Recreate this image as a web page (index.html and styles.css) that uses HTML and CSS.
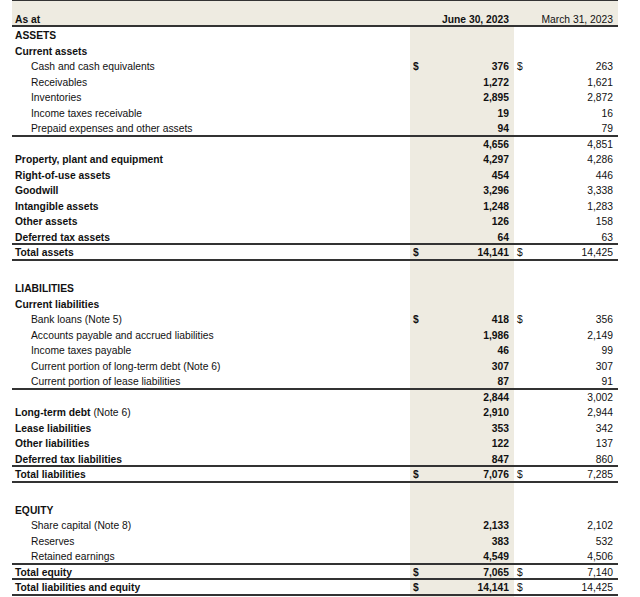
FILE: index.html
```html
<!DOCTYPE html>
<html>
<head>
<meta charset="utf-8">
<link rel="stylesheet" href="styles.css">
</head>
<body>
<div class="sheet">
  <div class="head">
    <div class="lab b">As at</div>
    <div class="hv b">June 30, 2023</div>
    <div class="hv">March 31, 2023</div>
  </div>

  <div class="row"><div class="lab b">ASSETS</div></div>
  <div class="row"><div class="lab b">Current assets</div></div>
  <div class="row"><div class="lab ind">Cash and cash equivalents</div><div class="val b"><span>$</span><span>376</span></div><div class="val"><span>$</span><span>263</span></div></div>
  <div class="row"><div class="lab ind">Receivables</div><div class="val b"><span></span><span>1,272</span></div><div class="val"><span></span><span>1,621</span></div></div>
  <div class="row"><div class="lab ind">Inventories</div><div class="val b"><span></span><span>2,895</span></div><div class="val"><span></span><span>2,872</span></div></div>
  <div class="row"><div class="lab ind">Income taxes receivable</div><div class="val b"><span></span><span>19</span></div><div class="val"><span></span><span>16</span></div></div>
  <div class="row"><div class="lab ind">Prepaid expenses and other assets</div><div class="val b"><span></span><span>94</span></div><div class="val"><span></span><span>79</span></div></div>
  <div class="rule"></div>
  <div class="row"><div class="lab"></div><div class="val b"><span></span><span>4,656</span></div><div class="val"><span></span><span>4,851</span></div></div>
  <div class="row"><div class="lab b">Property, plant and equipment</div><div class="val b"><span></span><span>4,297</span></div><div class="val"><span></span><span>4,286</span></div></div>
  <div class="row"><div class="lab b">Right-of-use assets</div><div class="val b"><span></span><span>454</span></div><div class="val"><span></span><span>446</span></div></div>
  <div class="row"><div class="lab b">Goodwill</div><div class="val b"><span></span><span>3,296</span></div><div class="val"><span></span><span>3,338</span></div></div>
  <div class="row"><div class="lab b">Intangible assets</div><div class="val b"><span></span><span>1,248</span></div><div class="val"><span></span><span>1,283</span></div></div>
  <div class="row"><div class="lab b">Other assets</div><div class="val b"><span></span><span>126</span></div><div class="val"><span></span><span>158</span></div></div>
  <div class="row"><div class="lab b">Deferred tax assets</div><div class="val b"><span></span><span>64</span></div><div class="val"><span></span><span>63</span></div></div>
  <div class="rule"></div>
  <div class="row"><div class="lab b">Total assets</div><div class="val b"><span>$</span><span>14,141</span></div><div class="val"><span>$</span><span>14,425</span></div></div>
  <div class="rule"></div>

  <div class="gap gap1"></div>

  <div class="row"><div class="lab b">LIABILITIES</div></div>
  <div class="row"><div class="lab b">Current liabilities</div></div>
  <div class="row"><div class="lab ind">Bank loans (Note 5)</div><div class="val b"><span>$</span><span>418</span></div><div class="val"><span>$</span><span>356</span></div></div>
  <div class="row"><div class="lab ind">Accounts payable and accrued liabilities</div><div class="val b"><span></span><span>1,986</span></div><div class="val"><span></span><span>2,149</span></div></div>
  <div class="row"><div class="lab ind">Income taxes payable</div><div class="val b"><span></span><span>46</span></div><div class="val"><span></span><span>99</span></div></div>
  <div class="row"><div class="lab ind">Current portion of long-term debt (Note 6)</div><div class="val b"><span></span><span>307</span></div><div class="val"><span></span><span>307</span></div></div>
  <div class="row"><div class="lab ind">Current portion of lease liabilities</div><div class="val b"><span></span><span>87</span></div><div class="val"><span></span><span>91</span></div></div>
  <div class="rule"></div>
  <div class="row"><div class="lab"></div><div class="val b"><span></span><span>2,844</span></div><div class="val"><span></span><span>3,002</span></div></div>
  <div class="row"><div class="lab"><span class="b">Long-term debt</span> (Note 6)</div><div class="val b"><span></span><span>2,910</span></div><div class="val"><span></span><span>2,944</span></div></div>
  <div class="row"><div class="lab b">Lease liabilities</div><div class="val b"><span></span><span>353</span></div><div class="val"><span></span><span>342</span></div></div>
  <div class="row"><div class="lab b">Other liabilities</div><div class="val b"><span></span><span>122</span></div><div class="val"><span></span><span>137</span></div></div>
  <div class="row"><div class="lab b">Deferred tax liabilities</div><div class="val b"><span></span><span>847</span></div><div class="val"><span></span><span>860</span></div></div>
  <div class="rule"></div>
  <div class="row"><div class="lab b">Total liabilities</div><div class="val b"><span>$</span><span>7,076</span></div><div class="val"><span>$</span><span>7,285</span></div></div>
  <div class="rule"></div>

  <div class="gap gap2"></div>

  <div class="row"><div class="lab b">EQUITY</div></div>
  <div class="row"><div class="lab ind">Share capital (Note 8)</div><div class="val b"><span></span><span>2,133</span></div><div class="val"><span></span><span>2,102</span></div></div>
  <div class="row"><div class="lab ind">Reserves</div><div class="val b"><span></span><span>383</span></div><div class="val"><span></span><span>532</span></div></div>
  <div class="row"><div class="lab ind">Retained earnings</div><div class="val b"><span></span><span>4,549</span></div><div class="val"><span></span><span>4,506</span></div></div>
  <div class="rule"></div>
  <div class="row"><div class="lab b">Total equity</div><div class="val b"><span>$</span><span>7,065</span></div><div class="val"><span>$</span><span>7,140</span></div></div>
  <div class="rule"></div>
  <div class="row"><div class="lab b">Total liabilities and equity</div><div class="val b"><span>$</span><span>14,141</span></div><div class="val"><span>$</span><span>14,425</span></div></div>
  <div class="rule"></div>
</div>
</body>
</html>
```

FILE: styles.css
```css
html, body {
  margin: 0;
  padding: 0;
  background: #ffffff;
}

body {
  font-family: "Liberation Sans", Arial, sans-serif;
  font-size: 10.3px;
  color: #111111;
}

.sheet {
  margin-left: 12px;
  width: 606px;
  min-height: 597px;
  background: linear-gradient(to right,
    transparent 0, transparent 398px,
    #eeebe1 398px, #eeebe1 502px,
    transparent 502px);
}

.head {
  display: grid;
  grid-template-columns: 398px 104px 104px;
  align-items: end;
  height: 24px;
  line-height: 10px;
  background: #eeebe1;
  border-top: 1px solid #333333;
  border-bottom: 2px solid #333333;
}

.head .lab {
  padding-left: 3px;
}

.hv {
  text-align: right;
  padding-right: 5px;
}

.row {
  display: grid;
  grid-template-columns: 398px 104px 104px;
  box-sizing: border-box;
  height: 15.5px;
  padding-top: 1px;
  line-height: 15.5px;
  white-space: nowrap;
}

.lab {
  padding-left: 3px;
}

.lab.ind {
  padding-left: 19px;
}

.val {
  display: flex;
  justify-content: space-between;
  padding: 0 5px 0 3px;
}

.b {
  font-weight: bold;
}

.rule {
  height: 2px;
  margin: -1px 0;
  background: #333333;
}

.gap1 {
  height: 20.5px;
}

.gap2 {
  height: 20px;
}
```
